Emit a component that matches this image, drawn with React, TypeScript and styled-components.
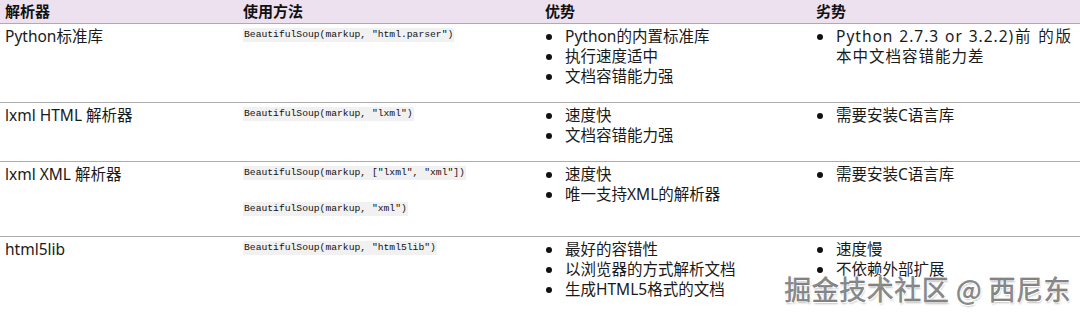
import React from "react";
import styled, { createGlobalStyle } from "styled-components";

const GlobalStyle = createGlobalStyle`
  body {
    margin: 0;
    background: #ffffff;
    font-family: "Noto Sans", "Noto Sans CJK SC", sans-serif;
    color: #1a1a1a;
  }
`;

interface Row {
  name: string;
  code: string[];
  pros: string[];
  cons: string[];
  height: number;
}

const rows: Row[] = [
  {
    name: "Python标准库",
    code: ['BeautifulSoup(markup, "html.parser")'],
    pros: ["Python的内置标准库", "执行速度适中", "文档容错能力强"],
    cons: ["Python 2.7.3 or 3.2.2)前 的版本中文档容错能力差"],
    height: 79,
  },
  {
    name: "lxml HTML 解析器",
    code: ['BeautifulSoup(markup, "lxml")'],
    pros: ["速度快", "文档容错能力强"],
    cons: ["需要安装C语言库"],
    height: 59,
  },
  {
    name: "lxml XML 解析器",
    code: ['BeautifulSoup(markup, ["lxml", "xml"])', 'BeautifulSoup(markup, "xml")'],
    pros: ["速度快", "唯一支持XML的解析器"],
    cons: ["需要安装C语言库"],
    height: 75,
  },
  {
    name: "html5lib",
    code: ['BeautifulSoup(markup, "html5lib")'],
    pros: ["最好的容错性", "以浏览器的方式解析文档", "生成HTML5格式的文档"],
    cons: ["速度慢", "不依赖外部扩展"],
    height: 80,
  },
];

const Table = styled.div`
  position: relative;
  width: 1080px;
  height: 313px;
  overflow: hidden;
`;

const Grid = styled.div`
  display: grid;
  grid-template-columns: 238px 302px 271px 1fr;
`;

const HeaderCell = styled.div`
  height: 24px;
  box-sizing: border-box;
  padding: 0 5px;
  background: #eee1ef;
  border-bottom: 1px solid #acacac;
  font-family: "Noto Sans CJK SC", sans-serif;
  font-weight: 700;
  font-size: 15px;
  line-height: 22px;
  color: #111;
`;

const Cell = styled.div<{ $h: number; $last?: boolean }>`
  height: ${(p) => p.$h}px;
  box-sizing: border-box;
  padding: 2px 5px 0;
  border-bottom: ${(p) => (p.$last ? "none" : "1px solid #acacac")};
  font-size: 15.5px;
  line-height: 20px;
`;

const CodeStack = styled.div`
  display: flex;
  flex-direction: column;
  align-items: flex-start;
  gap: 22px;
  padding-top: 2px;
`;

const Code = styled.code`
  display: inline-block;
  background: #f1f1f1;
  font-family: "Liberation Mono", "DejaVu Sans Mono", monospace;
  font-size: 9.7px;
  line-height: 14px;
  color: #111;
  white-space: pre;
  padding: 0 1px;
`;

const List = styled.ul`
  margin: 0;
  padding: 0;
  list-style: none;
`;

const Item = styled.li<{ $justify?: boolean }>`
  position: relative;
  padding-left: 20px;
  text-align: ${(p) => (p.$justify ? "justify" : "left")};
  letter-spacing: ${(p) => (p.$justify ? "1px" : "normal")};

  &::before {
    content: "";
    position: absolute;
    left: 1px;
    top: 8px;
    width: 6px;
    height: 6px;
    border-radius: 50%;
    background: #111;
  }
`;

const ConsCell = styled(Cell)`
  padding-right: 8px;
`;

const Watermark = styled.div`
  position: absolute;
  right: 9px;
  bottom: 8px;
  font-family: "Noto Sans CJK SC", sans-serif;
  font-size: 27px;
  line-height: 32px;
  letter-spacing: 0.5px;
  color: #8c8c8c;
  -webkit-text-stroke: 0.4px #6a6a6a;
  text-shadow: 1px 1px 0 #ffffff, -1px -1px 0 #ffffff, 1px -1px 0 #ffffff,
    -1px 1px 0 #ffffff, 1px 2px 2px rgba(0, 0, 0, 0.25);
  pointer-events: none;
`;

export default function App() {
  return (
    <>
      <GlobalStyle />
      <Table>
        <Grid>
          <HeaderCell>解析器</HeaderCell>
          <HeaderCell>使用方法</HeaderCell>
          <HeaderCell>优势</HeaderCell>
          <HeaderCell>劣势</HeaderCell>
          {rows.map((row, i) => {
            const last = i === rows.length - 1;
            return (
              <React.Fragment key={row.name}>
                <Cell $h={row.height} $last={last}>
                  {row.name}
                </Cell>
                <Cell $h={row.height} $last={last}>
                  <CodeStack>
                    {row.code.map((c) => (
                      <Code key={c}>{c}</Code>
                    ))}
                  </CodeStack>
                </Cell>
                <Cell $h={row.height} $last={last}>
                  <List>
                    {row.pros.map((p) => (
                      <Item key={p}>{p}</Item>
                    ))}
                  </List>
                </Cell>
                <ConsCell $h={row.height} $last={last}>
                  <List>
                    {row.cons.map((c) => (
                      <Item key={c} $justify={c.length > 15}>
                        {c}
                      </Item>
                    ))}
                  </List>
                </ConsCell>
              </React.Fragment>
            );
          })}
        </Grid>
        <Watermark>掘金技术社区 @ 西尼东</Watermark>
      </Table>
    </>
  );
}
